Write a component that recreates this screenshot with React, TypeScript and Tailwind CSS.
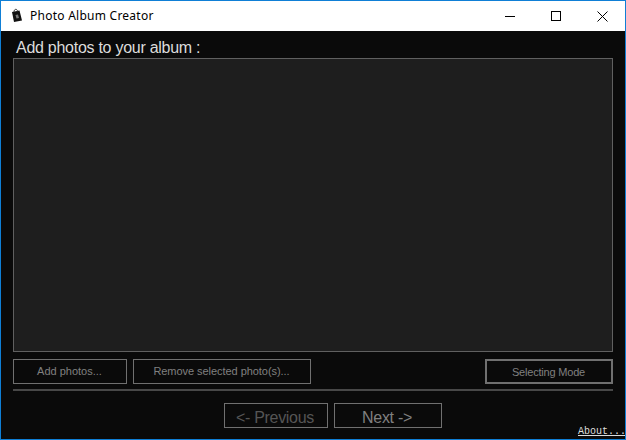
export default function App() {
  const btn = "flex items-center justify-center border border-[#707070] text-[#808080] text-[11px] h-[25px]";
  return (
    <div className="relative w-[626px] h-[440px] flex flex-col border border-[#0f7fd6] bg-[#0a0a0a] [font-family:'Liberation_Sans',Arial,sans-serif] overflow-hidden">
      <div className="h-[30px] shrink-0 bg-white flex items-center text-black">
        <svg width="13" height="15" viewBox="0 0 13 15" className="ml-[9px] mt-[-2px]">
          <path d="M2 4 L9.5 2.5 L12 12.5 L4 14 Z" fill="#111" />
          <path d="M4 4 C4 0.5 7.5 0.5 7.5 3.5" fill="none" stroke="#333" strokeWidth="1" />
          <path d="M5.5 7 L8 6.5 L9 10 L6.5 10.5 Z" fill="#777" />
        </svg>
        <span className="ml-[7px] text-[12px] tracking-[0.25px] [font-family:'Noto_Sans',sans-serif]">Photo Album Creator</span>
        <div className="ml-auto flex h-full items-center text-black">
          <div className="w-[46px] flex justify-center">
            <svg width="10" height="10" viewBox="0 0 10 10" className="mt-[-1px]"><path d="M0 5.5H10" stroke="#000" strokeWidth="1" /></svg>
          </div>
          <div className="w-[46px] flex justify-center">
            <svg width="10" height="10" viewBox="0 0 10 10"><rect x="0.5" y="0.5" width="9" height="9" fill="none" stroke="#000" strokeWidth="1" /></svg>
          </div>
          <div className="w-[46px] flex justify-center">
            <svg width="11" height="11" viewBox="0 0 11 11"><path d="M0.5 0.5L10.5 10.5M10.5 0.5L0.5 10.5" stroke="#000" strokeWidth="1" /></svg>
          </div>
        </div>
      </div>
      <div className="flex-1 flex flex-col px-[12px] min-h-0">
        <div className="h-[27px] shrink-0 flex items-end pl-[3px] text-[16px] leading-[20px] tracking-[-0.27px] text-[#dcdcdc]">Add photos to your album :</div>
        <div className="h-[294px] shrink-0 border border-[#606060] bg-[#1e1e1e]" />
        <div className="mt-[7px] flex shrink-0 gap-[6px]">
          <div className={`${btn} w-[114px] pr-[1px]`}>Add photos...</div>
          <div className={`${btn} w-[178px] tracking-[-0.05px] pr-[1px]`}>Remove selected photo(s)...</div>
          <div className={`${btn} ml-auto w-[128px] border-2 pt-[2px] pr-[1px] tracking-[-0.2px]`}>Selecting Mode</div>
        </div>
        <div className="mt-[5px] h-[2px] shrink-0 bg-[#484848]" />
        <div className="mt-[12px] flex shrink-0 gap-[6px] pl-[211px]">
          <div className="flex items-center justify-center border border-[#707070] text-[#555] text-[16px] tracking-[-0.3px] pt-[4px] pr-[2px] h-[25px] w-[104px]">&lt;- Previous</div>
          <div className="flex items-center justify-center border border-[#707070] text-[#808080] text-[16px] tracking-[-0.3px] pt-[4px] pr-[2px] h-[25px] w-[108px]">Next -&gt;</div>
        </div>
      </div>
      <span className="absolute right-[-1px] bottom-[1px] text-[10px] leading-[12px] text-[#ddd] underline [font-family:'Liberation_Mono',monospace]">About...</span>
    </div>
  );
}
